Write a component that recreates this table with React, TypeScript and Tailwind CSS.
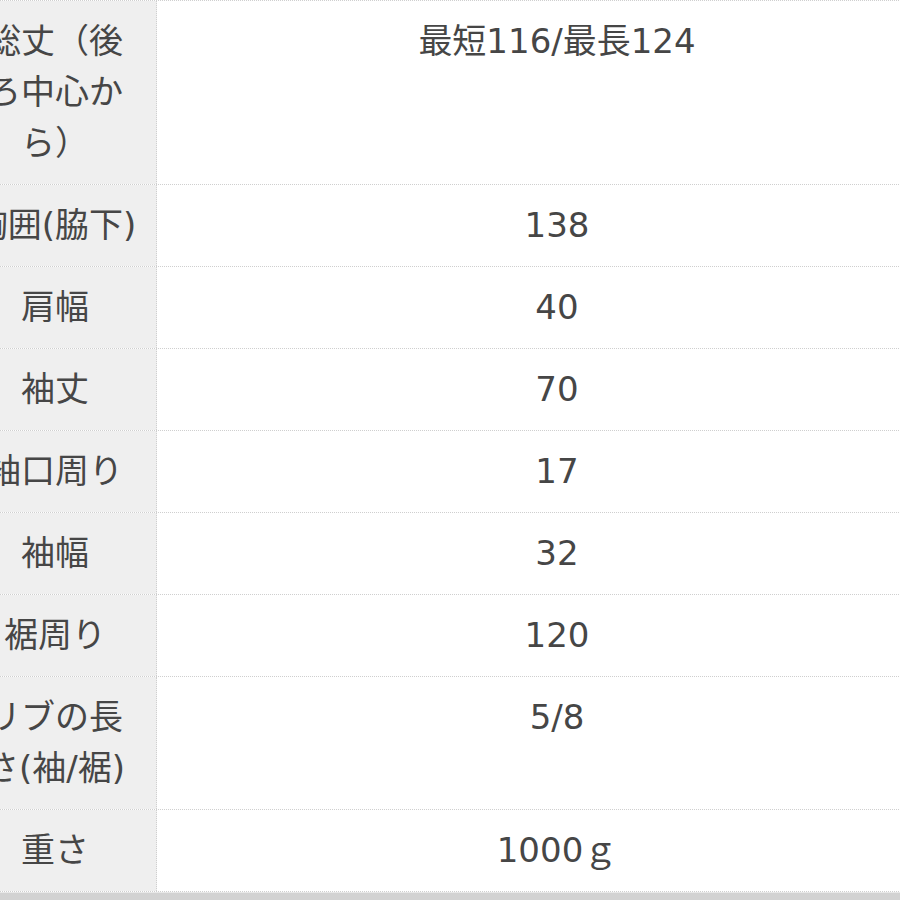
const ROWS: { label: string; value: string }[] = [
  { label: "総丈（後ろ中心から）", value: "最短116/最長124" },
  { label: "胸囲(脇下)", value: "138" },
  { label: "肩幅", value: "40" },
  { label: "袖丈", value: "70" },
  { label: "袖口周り", value: "17" },
  { label: "袖幅", value: "32" },
  { label: "裾周り", value: "120" },
  { label: "リブの長さ(袖/裾)", value: "5/8" },
  { label: "重さ", value: "1000ｇ" },
];

export default function App() {
  return (
    <div
      className="h-[900px] w-[900px] overflow-hidden bg-white text-[#464646]"
      style={{ fontFamily: '"DejaVu Sans", "Noto Sans CJK JP", sans-serif' }}
    >
      <div className="-ml-[46px] w-[1003px] border-t border-dotted border-[#cfcfcf]">
        {ROWS.map((r) => (
          <div key={r.label} className="flex border-b border-dotted border-[#cfcfcf]">
            <div className="w-[203px] shrink-0 border-r border-dotted border-[#cfcfcf] bg-[#efefef] px-[19px] py-[15px] text-center text-[34px] leading-[51px]">
              {r.label}
            </div>
            <div className="flex-1 px-5 py-[15px] text-center text-[34px] leading-[51px]">
              {r.value}
            </div>
          </div>
        ))}
      </div>
      <div className="h-[12px] border-t border-[#e8e8e8] bg-[#d2d2d2]" />
    </div>
  );
}
